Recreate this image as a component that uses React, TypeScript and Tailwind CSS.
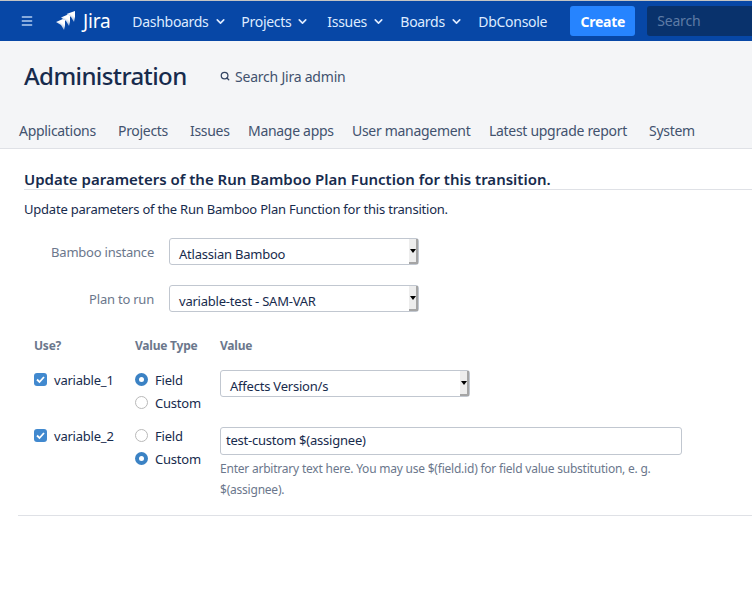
import { ChevronDown, Menu, Search } from 'lucide-react';

const navItems = [
  { label: 'Dashboards', width: 'w-[109px]' },
  { label: 'Projects', width: 'w-[86px]' },
  { label: 'Issues', width: 'w-[73px]' },
  { label: 'Boards', width: 'w-[78px]' },
];

const adminTabs = [
  { label: 'Applications', width: 'w-[99px]' },
  { label: 'Projects', width: 'w-[72px]' },
  { label: 'Issues', width: 'w-[58px]' },
  { label: 'Manage apps', width: 'w-[104px]' },
  { label: 'User management', width: 'w-[137px]' },
  { label: 'Latest upgrade report', width: 'w-[160px]' },
  { label: 'System', width: 'w-[60px]' },
];

function JiraLogo() {
  return (
    <svg width="20" height="20" viewBox="0 0 20 20" className="mr-[4px] shrink-0">
      <defs>
        <linearGradient id="jira-fade" x1="0.8" y1="0" x2="0.35" y2="1">
          <stop offset="0.35" stopColor="#ffffff" />
          <stop offset="1" stopColor="#ffffff" stopOpacity="0.35" />
        </linearGradient>
      </defs>
      <path d="M0 11 L7 8 L9 9 L9 15 L8 19 L5 14 Z" fill="url(#jira-fade)" />
      <path d="M5 6.5 L12 3.5 L14 5 L14 11 L13 15 L10 10 Z" fill="url(#jira-fade)" />
      <path d="M10.5 3 L19 0 L19 6 L18 11 L15 6 Z" fill="url(#jira-fade)" />
    </svg>
  );
}

function NativeSelect({ label, className }: { label: string; className: string }) {
  return (
    <div className={`flex h-[27px] items-stretch rounded-[3px] border border-[#c1c7d0] bg-white ${className}`}>
      <span className="flex-1 pl-[9px] pt-[5px] text-[13px] leading-[20px] text-[#172b4d]">{label}</span>
      <span className="flex w-[9px] items-center justify-center border-r-2 border-b-2 border-[#a5a5a5] bg-[#ededed]">
        <span className="h-0 w-0 border-x-[3px] border-t-[4px] border-x-transparent border-t-black" />
      </span>
    </div>
  );
}

function Radio({ checked, label }: { checked: boolean; label: string }) {
  return (
    <div className="flex h-[23px] items-center gap-[7px]">
      {checked ? (
        <span className="flex size-[13px] items-center justify-center rounded-full bg-[#3b82c4]">
          <span className="size-[5px] rounded-full bg-white" />
        </span>
      ) : (
        <span className="size-[13px] rounded-full border border-[#b9b9b9] bg-white" />
      )}
      <span className="text-[13px] leading-[20px] text-[#172b4d]">{label}</span>
    </div>
  );
}

function CheckBox({ label }: { label: string }) {
  return (
    <div className="flex h-[23px] items-center gap-[7px]">
      <span className="flex size-[13px] items-center justify-center rounded-[3px] bg-[#4189cf]">
        <svg width="11" height="11" viewBox="0 0 11 11" fill="none">
          <path d="M2 5.5 L4.5 8 L9 3" stroke="#fff" strokeWidth="1.8" />
        </svg>
      </span>
      <span className="text-[13px] leading-[20px] text-[#172b4d]">{label}</span>
    </div>
  );
}

export default function App() {
  return (
    <div className="h-[604px] w-[752px] overflow-hidden bg-white font-['Noto_Sans',sans-serif] tracking-[-0.22px] text-[#172b4d]">
      {/* Top nav */}
      <header className="flex h-[41px] items-center overflow-hidden border-t border-[#c4c4c4] bg-[#0747a6] pl-[20px] text-[#deebff]">
        <Menu className="mr-[22px] size-[14px] shrink-0 text-[#b3cdf0]" strokeWidth={2.5} />
        <JiraLogo />
        <span className="ml-[3px] mr-[22px] text-[19px] leading-none text-white">Jira</span>
        {navItems.map(({ label, width }) => (
          <div key={label} className={`flex shrink-0 items-center gap-[5px] text-[14px] tracking-[-0.3px] ${width}`}>
            {label}
            <ChevronDown className="size-[13px]" strokeWidth={3} />
          </div>
        ))}
        <span className="w-[92px] shrink-0 text-[14px] tracking-[-0.3px]">DbConsole</span>
        <div className="flex h-[30px] w-[65px] shrink-0 items-center justify-center rounded-[3px] bg-[#2684ff] text-[14px] font-bold text-white">
          Create
        </div>
        <div className="ml-[12px] flex h-[30px] w-[110px] shrink-0 items-center rounded-[3px] bg-[#09326c] pb-[2px] pl-[10px] text-[14px] text-[#5e7ba5]">
          Search
        </div>
      </header>

      {/* Admin header */}
      <div className="h-[108px] border-b border-[#dfe1e6] bg-[#f4f5f7]">
        <div className="flex h-[70px] items-center pl-[24px]">
          <h1 className="w-[196px] text-[24px] font-medium leading-none tracking-[-0.6px] text-[#172b4d]">Administration</h1>
          <Search className="mr-[5px] size-[10px] text-[#344563]" strokeWidth={3} />
          <span className="text-[14px] text-[#42526e]">Search Jira admin</span>
        </div>
        <nav className="flex pl-[19px] pt-[10px]">
          {adminTabs.map(({ label, width }) => (
            <span key={label} className={`shrink-0 whitespace-nowrap text-[14px] leading-[20px] tracking-[-0.3px] text-[#42526e] ${width}`}>
              {label}
            </span>
          ))}
        </nav>
      </div>

      {/* Form */}
      <main className="pt-[20px]">
        <h2 className="ml-[24px] border-b border-[#dfe1e6] text-[15px] font-semibold leading-[20px] tracking-normal text-[#172b4d]">
          Update parameters of the Run Bamboo Plan Function for this transition.
        </h2>
        <p className="ml-[24px] mt-[9px] text-[13px] leading-[20px]">
          Update parameters of the Run Bamboo Plan Function for this transition.
        </p>

        <div className="mt-[19px] flex h-[27px] items-center">
          <label className="w-[154px] pt-[2px] text-right text-[13px] text-[#6b778c]">Bamboo instance</label>
          <NativeSelect label="Atlassian Bamboo" className="ml-[15px] w-[250px]" />
        </div>
        <div className="mt-[20px] flex h-[27px] items-center">
          <label className="w-[154px] pt-[2px] text-right text-[13px] text-[#6b778c]">Plan to run</label>
          <NativeSelect label="variable-test - SAM-VAR" className="ml-[15px] w-[250px]" />
        </div>

        <div className="ml-[18px] mt-[24px] border-b border-[#dfe1e6] pb-[15px] pl-[16px]">
          <div className="flex text-[12px] font-bold leading-[20px] text-[#6b778c]">
            <span className="w-[101px]">Use?</span>
            <span className="w-[85px]">Value Type</span>
            <span>Value</span>
          </div>

          <div className="mt-[12px] flex">
            <div className="w-[101px]">
              <CheckBox label="variable_1" />
            </div>
            <div className="w-[85px]">
              <Radio checked label="Field" />
              <Radio checked={false} label="Custom" />
            </div>
            <div className="pt-[2px]">
              <NativeSelect label="Affects Version/s" className="w-[250px]" />
            </div>
          </div>

          <div className="mt-[10px] flex">
            <div className="w-[101px]">
              <CheckBox label="variable_2" />
            </div>
            <div className="w-[85px]">
              <Radio checked={false} label="Field" />
              <Radio checked label="Custom" />
            </div>
            <div className="w-[462px] pt-[3px]">
              <div className="flex h-[28px] items-center rounded-[3px] border border-[#c1c7d0] bg-white pl-[5px] text-[13px]">
                test-custom $(assignee)
              </div>
              <p className="mt-[3px] text-[12px] leading-[21px] text-[#6b778c]">
                Enter arbitrary text here. You may use $(field.id) for field value substitution, e. g. $(assignee).
              </p>
            </div>
          </div>
        </div>
      </main>
    </div>
  );
}
